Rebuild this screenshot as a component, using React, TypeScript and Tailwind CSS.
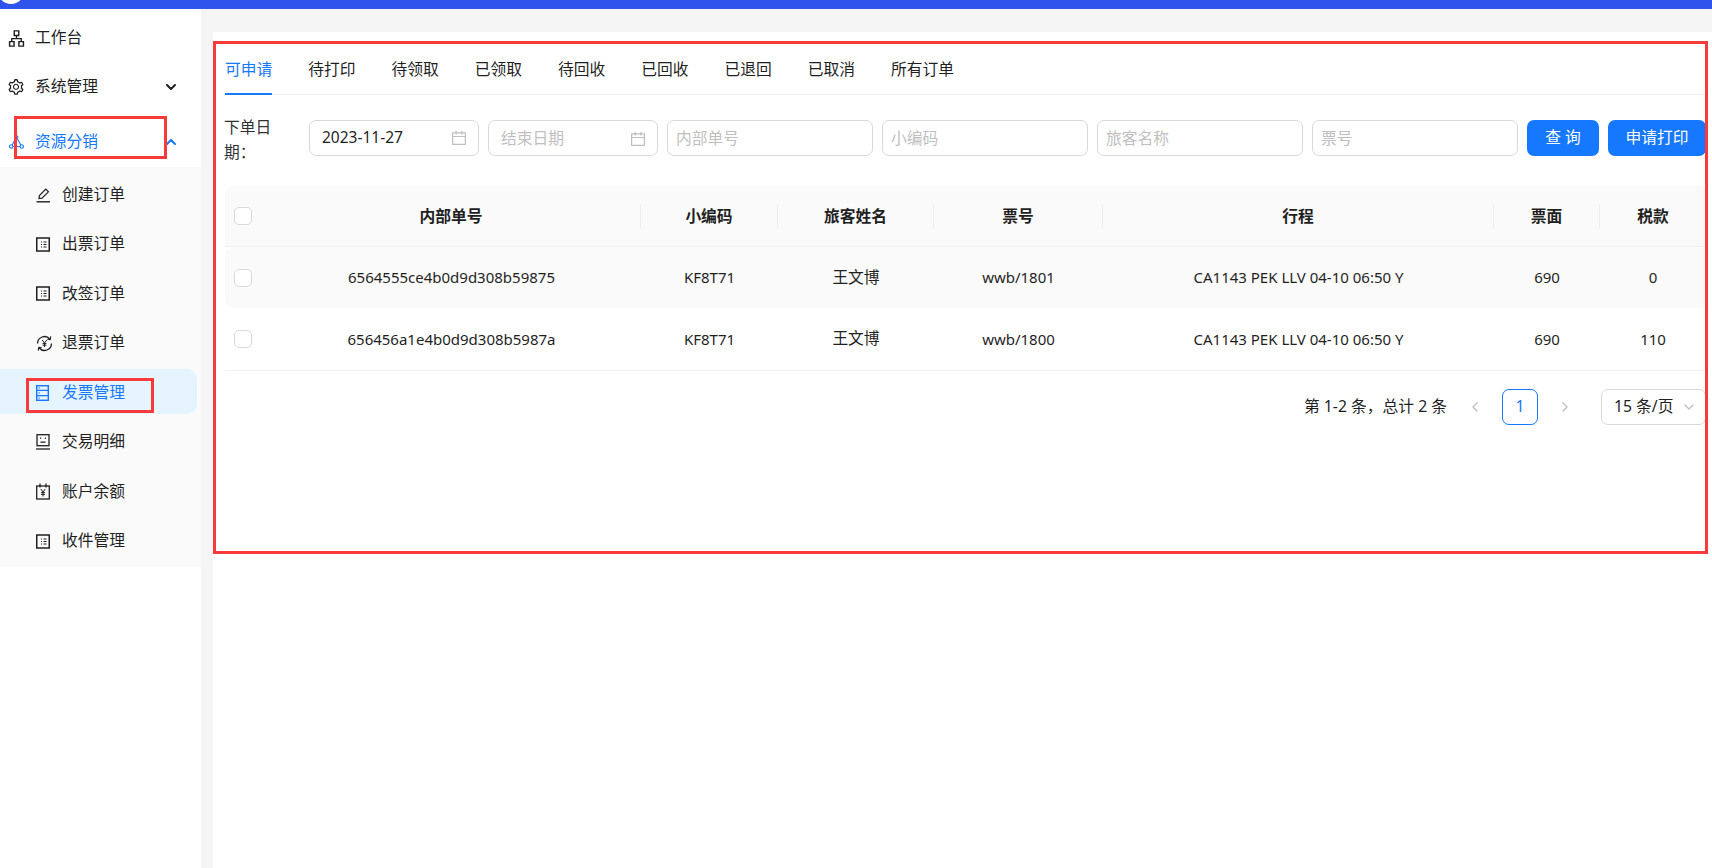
import { AiOutlineApartment, AiOutlineSetting, AiOutlineCalendar } from 'react-icons/ai'
import { ChevronDown, ChevronUp, ChevronLeft, ChevronRight } from 'lucide-react'
import type { ReactNode } from 'react'

const font = { fontFamily: '"Noto Sans", "Noto Sans CJK SC", sans-serif' }

// 小图标
function Sheet() {
  return (
    <svg width="14" height="15" viewBox="0 0 14 15" fill="none" stroke="currentColor">
      <rect x=".75" y="1" width="12.5" height="13" strokeWidth="1.5" />
      <path d="M5 5h1M7.5 5h3M5 7.5h1M7.5 7.5h3M5 10h1M7.5 10h3" strokeWidth="1.1" />
    </svg>
  )
}

function Pen() {
  return (
    <svg width="15" height="16" viewBox="0 0 15 16" fill="none" stroke="currentColor" strokeWidth="1.2">
      <path d="M3 11.5 3.4 8.6 9.8 2.2l2.6 2.6L6 11.2z" />
      <path d="M.5 14.8h13.5" strokeWidth="1.4" />
    </svg>
  )
}

function Refund() {
  return (
    <svg width="17" height="17" viewBox="0 0 17 17" fill="none" stroke="currentColor" strokeWidth="1.3">
      <path d="M1.5 8.5A7 7 0 0 1 13.8 4M15.5 8.5A7 7 0 0 1 3.2 13" />
      <path d="M14.8 1.4 14.2 4.6 11.2 4.2M2.2 15.6 2.8 12.4 5.8 12.8" strokeWidth="1.1" />
      <path d="M6.2 5 8.5 8l2.3-3M8.5 8v4M6.6 8.6h3.8M6.6 10.2h3.8" strokeWidth="1" />
    </svg>
  )
}

function Invoice() {
  return (
    <svg width="13" height="16" viewBox="0 0 13 16" fill="none" stroke="currentColor" strokeWidth="1.4">
      <rect x=".7" y=".7" width="11.6" height="14.6" />
      <path d="M.7 5.4h11.6M.7 10.6h11.6M2.6 3h1M2.6 8h1M2.6 13h1" />
    </svg>
  )
}

function Ledger() {
  return (
    <svg width="14" height="16" viewBox="0 0 14 16" fill="none" stroke="currentColor" strokeWidth="1.3">
      <rect x="1" y=".7" width="12" height="11" />
      <path d="M0 15h14" />
      <path d="M4 4.2h1.2M8.8 4.2H10M4.5 8.2h5" />
    </svg>
  )
}

function Balance() {
  return (
    <svg width="14" height="17" viewBox="0 0 14 17" fill="none" stroke="currentColor" strokeWidth="1.3">
      <rect x=".7" y="3" width="12.6" height="13" />
      <path d="M4 .5v4M10 .5v4" />
      <path d="M4.8 6 7 9l2.2-3M7 9v4.5M5 9.6h4M5 11.4h4" strokeWidth="1" />
    </svg>
  )
}

function Nodes() {
  return (
    <svg width="15" height="14" viewBox="0 0 15 14" fill="none" stroke="currentColor" strokeWidth="1.1">
      <circle cx="7.5" cy="2.2" r="1.4" />
      <circle cx="2.2" cy="11.5" r="1.7" />
      <circle cx="12.8" cy="11.5" r="1.7" />
      <path d="M6.8 3.6 3.2 10M8.2 3.6l3.6 6.4M4 11.5h7" />
    </svg>
  )
}

const subMenu: { label: string; icon: ReactNode; active?: boolean }[] = [
  { label: '创建订单', icon: <Pen /> },
  { label: '出票订单', icon: <Sheet /> },
  { label: '改签订单', icon: <Sheet /> },
  { label: '退票订单', icon: <Refund /> },
  { label: '发票管理', icon: <Invoice />, active: true },
  { label: '交易明细', icon: <Ledger /> },
  { label: '账户余额', icon: <Balance /> },
  { label: '收件管理', icon: <Sheet /> },
]

const tabs = ['可申请', '待打印', '待领取', '已领取', '待回收', '已回收', '已退回', '已取消', '所有订单']

const rows = [
  { id: '6564555ce4b0d9d308b59875', pnr: 'KF8T71', name: '王文博', ticket: 'wwb/1801', trip: 'CA1143 PEK LLV 04-10 06:50 Y', price: '690', tax: '0' },
  { id: '656456a1e4b0d9d308b5987a', pnr: 'KF8T71', name: '王文博', ticket: 'wwb/1800', trip: 'CA1143 PEK LLV 04-10 06:50 Y', price: '690', tax: '110' },
]

const cols = 'grid grid-cols-[37px_379px_137px_156px_169px_391px_106px_106px] items-center'

function Checkbox() {
  return <span className="block w-[18px] h-[18px] ml-[9px] bg-white border border-[#d9d9d9] rounded-[5px]" />
}

function HeadCell({ children, last }: { children: ReactNode; last?: boolean }) {
  return (
    <div className={`text-center font-semibold h-[25px] leading-[25px] ${last ? '' : 'border-r border-[#efefef]'}`}>
      {children}
    </div>
  )
}

function Field({ placeholder, width }: { placeholder: string; width: string }) {
  return (
    <div className={`${width} h-[36px] flex items-center px-[8px] pt-[1px] border border-[#d9d9d9] rounded-[7px] text-[#bfbfbf] bg-white`}>
      {placeholder}
    </div>
  )
}

export default function App() {
  return (
    <div className="relative h-screen overflow-hidden flex flex-col bg-white text-[15.75px] text-[#1f1f1f]" style={font}>
      <div className="h-[9px] shrink-0 bg-[#2f54eb] relative overflow-hidden">
        <div className="absolute left-[-2px] top-[-22px] w-[26px] h-[26px] rounded-full bg-white" />
      </div>

      <div className="flex-1 flex min-h-0">
        {/* 左侧菜单 */}
        <aside className="w-[201px] shrink-0 bg-white">
          <div className="h-[57px] flex items-center pl-[7px] pt-[1px]">
            <AiOutlineApartment size={19} />
            <span className="ml-[9px]">工作台</span>
          </div>
          <div className="h-[41px] flex items-center pl-[7px] pr-[22px] pt-[1px]">
            <AiOutlineSetting size={18} />
            <span className="ml-[10px] flex-1">系统管理</span>
            <ChevronDown size={16} strokeWidth={3} />
          </div>
          <div className="h-[60px] flex items-center pl-[9px] pr-[22px] text-[#1677ff] pt-[9px]">
            <Nodes />
            <span className="ml-[11px] flex-1">资源分销</span>
            <ChevronUp size={16} strokeWidth={3} />
          </div>
          <div className="h-[400px] bg-[#fafafa] pt-[4px] pr-[4px] flex flex-col gap-[4.5px]">
            {subMenu.map((item) => (
              <div
                key={item.label}
                className={`h-[45px] pt-[2px] flex items-center rounded-r-[10px] ${item.active ? 'bg-[#e6f4ff] text-[#1677ff]' : ''}`}
              >
                <span className="w-[62px] pl-[36px] flex">{item.icon}</span>
                <span>{item.label}</span>
              </div>
            ))}
          </div>
        </aside>

        {/* 内容区 */}
        <main className="flex-1 min-w-0 bg-[#f5f5f5] pt-[23px] pl-[12px]">
          <div className="h-full bg-white pl-[12px] pr-[5px]">
            <div className="h-[63px] flex items-start gap-[36px] border-b border-[#f0f0f0] pt-[25px]">
              {tabs.map((tab, i) => (
                <div key={tab} className={`h-[38px] leading-[24px] ${i === 0 ? 'text-[#1677ff] border-b-2 border-[#1677ff]' : ''}`}>
                  {tab}
                </div>
              ))}
            </div>

            <div className="flex items-start gap-[9px] mt-[25px]">
              <div className="w-[75px] -ml-[1px] mr-[1px] leading-[25px] text-[#303133] -mt-[5px]">下单日期：</div>
              <div className="w-[170px] h-[36px] flex items-center justify-between pl-[12px] pr-[10px] border border-[#d9d9d9] rounded-[7px]">
                <span className="text-[15.5px]">2023-11-27</span>
                <AiOutlineCalendar size={18} className="text-[#bfbfbf]" />
              </div>
              <div className="w-[170px] h-[36px] flex items-center justify-between pl-[12px] pr-[10px] pt-[1px] border border-[#d9d9d9] rounded-[7px] text-[#bfbfbf]">
                <span>结束日期</span>
                <AiOutlineCalendar size={18} />
              </div>
              <Field placeholder="内部单号" width="w-[206px]" />
              <Field placeholder="小编码" width="w-[206px]" />
              <Field placeholder="旅客名称" width="w-[206px]" />
              <Field placeholder="票号" width="w-[206px]" />
              <button className="w-[72px] h-[36px] rounded-[7px] bg-[#1677ff] text-white">查 询</button>
              <button className="w-[98px] h-[36px] rounded-[7px] bg-[#1677ff] text-white">申请打印</button>
            </div>

            <div className="mt-[21px] text-[15px]">
              <div className={`${cols} h-[61px] bg-[#fafafa] rounded-t-[8px] border-b border-[#f0f0f0] text-[15.75px]`}>
                <Checkbox />
                <HeadCell>内部单号</HeadCell>
                <HeadCell>小编码</HeadCell>
                <HeadCell>旅客姓名</HeadCell>
                <HeadCell>票号</HeadCell>
                <HeadCell>行程</HeadCell>
                <HeadCell>票面</HeadCell>
                <HeadCell last>税款</HeadCell>
              </div>
              {rows.map((row, i) => (
                <div
                  key={row.id}
                  className={`${cols} text-center ${i === 0 ? 'h-[61px] bg-[#fafafa] rounded-[8px]' : 'h-[63px] border-b border-[#f0f0f0]'}`}
                >
                  <Checkbox />
                  <div>{row.id}</div>
                  <div>{row.pnr}</div>
                  <div className="text-[15.75px]">{row.name}</div>
                  <div>{row.ticket}</div>
                  <div>{row.trip}</div>
                  <div>{row.price}</div>
                  <div>{row.tax}</div>
                </div>
              ))}
            </div>

            <div className="flex items-center justify-end mt-[18px] pr-[1px] text-[15.75px]">
              <span className="mr-[20px]">第 1-2 条，总计 2 条</span>
              <ChevronLeft size={16} className="text-[#bfbfbf]" />
              <span className="w-[36px] h-[36px] mx-[19px] flex items-center justify-center border border-[#1677ff] rounded-[7px] text-[#1677ff]">1</span>
              <ChevronRight size={16} className="text-[#bfbfbf]" />
              <div className="w-[105px] h-[36px] ml-[28px] flex items-center justify-between pl-[12px] pr-[8px] border border-[#d9d9d9] rounded-[7px]">
                <span>15 条/页</span>
                <ChevronDown size={16} className="text-[#bfbfbf]" />
              </div>
            </div>
          </div>
        </main>
      </div>

      {/* 截图上的红框标注 */}
      <div className="absolute left-[14px] top-[116px] w-[153px] h-[43px] border-[3px] border-[#f93a3a]" />
      <div className="absolute left-[26px] top-[378px] w-[128px] h-[35px] border-[3px] border-[#f93a3a]" />
      <div className="absolute left-[213px] top-[41px] w-[1495px] h-[513px] border-[3px] border-[#f93a3a]" />
    </div>
  )
}
